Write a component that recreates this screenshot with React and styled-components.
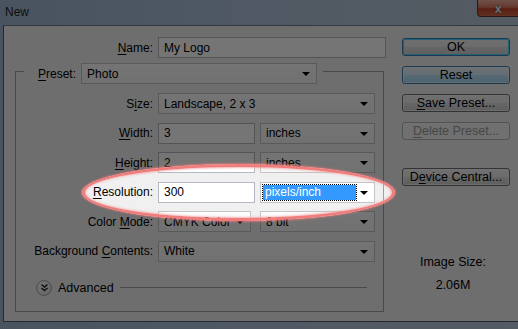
import React from 'react';
import styled, { createGlobalStyle } from 'styled-components';

const GlobalStyle = createGlobalStyle`
  html, body {
    margin: 0;
    padding: 0;
    background: #2b2f36;
  }
  * {
    box-sizing: border-box;
  }
`;

const Window = styled.div`
  position: relative;
  width: 518px;
  height: 329px;
  overflow: hidden;
  display: flex;
  flex-direction: column;
  background: linear-gradient(90deg, #9fb6cf 0%, #aec2d8 50%, #b7c6d6 100%);
  font-family: "Liberation Sans", Arial, sans-serif;
  font-size: 12px;
  color: #000;
`;

const TitleBar = styled.div`
  height: 25px;
  display: flex;
  align-items: flex-start;
  padding-left: 5px;
  flex-shrink: 0;
`;

const Title = styled.div`
  margin-top: 5px;
  font-size: 12px;
  color: #1e1e1e;
`;

const CloseButton = styled.div`
  margin-left: auto;
  width: 41px;
  height: 17px;
  border: 1px solid #5b3a36;
  border-top: none;
  border-right: none;
  border-radius: 0 0 0 4px;
  background: linear-gradient(180deg, #f0b3a3 0%, #dc7a62 45%, #c2452a 55%, #d66a4a 100%);
  display: flex;
  align-items: center;
  justify-content: center;
  color: #f2f2f2;
  font-weight: bold;
  font-size: 13px;
  text-shadow: 0 0 1px #333, 0 0 1px #333;
`;

const Body = styled.div`
  margin-left: 3px;
  height: 297px;
  border-left: 1px solid #4a5a6c;
  border-top: 1px solid #6b7d91;
  border-bottom: 1px solid #4a5a6c;
  background: #f0f0f0;
  display: flex;
  padding: 11px 0 0 11px;
  gap: 16px;
`;

const FormColumn = styled.div`
  width: 371px;
  display: flex;
  flex-direction: column;
`;

const Row = styled.div`
  display: flex;
  align-items: center;
  height: 21px;
  gap: 5px;
`;

const Label = styled.label`
  width: ${(p) => p.$width || 137}px;
  text-align: right;
  white-space: nowrap;
  flex-shrink: 0;
`;

const Key = styled.span`
  text-decoration: underline;
  text-underline-offset: 2px;
`;

const Input = styled.div`
  width: ${(p) => p.$width}px;
  height: 21px;
  border: 1px solid #b4b8c0;
  background: #fff;
  display: flex;
  align-items: center;
  padding-left: 5px;
  flex-shrink: 0;
`;

const Select = styled.div`
  position: relative;
  width: ${(p) => p.$width}px;
  height: 21px;
  border: 1px solid #c4c4c4;
  background: ${(p) => (p.$focus ? '#fff' : 'linear-gradient(180deg, #fdfdfd 0%, #f6f6f6 100%)')};
  display: flex;
  align-items: center;
  padding-left: ${(p) => (p.$focus ? 2 : 5)}px;
  flex-shrink: 0;
  &::after {
    content: '';
    position: absolute;
    right: 6px;
    top: 8px;
    border-left: 4px solid transparent;
    border-right: 4px solid transparent;
    border-top: 4px solid #000;
  }
`;

const Highlight = styled.span`
  width: 93px;
  height: 15px;
  background: #3399ff;
  color: #fff;
  outline: 1px dotted #000;
  display: flex;
  align-items: center;
  padding-left: 2px;
`;

const Group = styled.div`
  margin-top: 5px;
  display: flex;
  flex-direction: column;
  width: 369px;
`;

const GroupHead = styled.div`
  display: flex;
  align-items: flex-start;
  height: 21px;
`;

const HeadLine = styled.div`
  margin-top: 8px;
  margin-left: ${(p) => (p.$fill ? 6 : 0)}px;
  border-top: 1px solid #a0a0a0;
  width: ${(p) => (p.$fill ? 'auto' : '9px')};
  flex: ${(p) => (p.$fill ? 1 : '0 0 auto')};
  border-right: ${(p) => (p.$fill ? '1px solid #a0a0a0' : 'none')};
  border-left: ${(p) => (p.$fill ? 'none' : '1px solid #a0a0a0')};
  height: 13px;
`;

const PresetLabel = styled.label`
  margin-left: 14px;
  margin-right: 5px;
  height: 21px;
  display: flex;
  align-items: center;
`;

const GroupBox = styled.div`
  border: 1px solid #a0a0a0;
  border-top: none;
  height: 241px;
  margin-top: -13px;
  padding-top: 22px;
  display: flex;
  flex-direction: column;
`;

const Fields = styled.div`
  display: flex;
  flex-direction: column;
  gap: 8.5px;
`;

const Pair = styled.div`
  display: flex;
  gap: ${(p) => p.$gap || 5}px;
`;

const AdvancedRow = styled.div`
  margin-top: 18px;
  margin-left: 20px;
  margin-right: 16px;
  display: flex;
  align-items: center;
  height: 16px;
`;

const RoundButton = styled.div`
  width: 16px;
  height: 16px;
  border-radius: 50%;
  border: 1px solid #a9a9a9;
  background: radial-gradient(circle at 40% 35%, #ffffff 0%, #e6e6e6 60%, #cfcfcf 100%);
  display: flex;
  align-items: center;
  justify-content: center;
`;

const AdvancedText = styled.span`
  margin-left: 6px;
  margin-right: 6px;
  font-size: 12.5px;
`;

const Rule = styled.div`
  flex: 1;
  border-top: 1px solid #a0a0a0;
`;

const ButtonColumn = styled.div`
  display: flex;
  flex-direction: column;
  padding-top: 1px;
  width: 108px;
`;

const Button = styled.div`
  height: 18px;
  margin-top: ${(p) => p.$top || 0}px;
  border: 1px solid ${(p) => (p.$variant ? '#3c7fb1' : p.$disabled ? '#adb2b5' : '#707070')};
  border-radius: 3px;
  background: ${(p) =>
    p.$variant === 'hover'
      ? 'linear-gradient(180deg, #eaf6fd 0%, #d9f0fc 50%, #bee6fd 51%, #a7d9f5 100%)'
      : p.$disabled
      ? '#f4f4f4'
      : 'linear-gradient(180deg, #f2f2f2 0%, #ebebeb 50%, #dddddd 51%, #cfcfcf 100%)'};
  box-shadow: ${(p) => (p.$variant === 'default' ? 'inset 0 0 0 1px #48d5ff' : 'inset 0 0 0 1px rgba(255,255,255,0.6)')};
  color: ${(p) => (p.$disabled ? '#9a9a9a' : '#000')};
  display: flex;
  align-items: center;
  justify-content: center;
  font-size: 12.5px;
  white-space: nowrap;
`;

const SizeInfo = styled.div`
  margin-top: 69px;
  display: flex;
  flex-direction: column;
  align-items: center;
  gap: 9px;
  font-size: 12.5px;
  margin-left: -6px;
`;

const Spotlight = styled.div`
  position: absolute;
  left: 82px;
  top: 164px;
  width: 313px;
  height: 57px;
  border-radius: 50%;
  border: 3px solid #f07c7c;
  box-shadow:
    0 0 2px 1px rgba(240, 120, 120, 0.7),
    inset 0 0 2px 1px rgba(245, 170, 170, 0.8),
    0 0 0 1000px rgba(0, 0, 0, 0.54);
  pointer-events: none;
`;

function Chevrons() {
  return (
    <svg width="9" height="9" viewBox="0 0 9 9">
      <path d="M1.5 1.5 L4.5 4 L7.5 1.5" fill="none" stroke="#222" strokeWidth="1.4" />
      <path d="M1.5 5 L4.5 7.5 L7.5 5" fill="none" stroke="#222" strokeWidth="1.4" />
    </svg>
  );
}

export default function App() {
  return (
    <>
      <GlobalStyle />
      <Window>
        <TitleBar>
          <Title>New</Title>
          <CloseButton>x</CloseButton>
        </TitleBar>
        <Body>
          <FormColumn>
            <Row>
              <Label $width={138}><Key>N</Key>ame:</Label>
              <Input $width={228}>My Logo</Input>
            </Row>
            <Group>
              <GroupHead>
                <HeadLine />
                <PresetLabel><Key>P</Key>reset:</PresetLabel>
                <Select $width={236}>Photo</Select>
                <HeadLine $fill />
              </GroupHead>
              <GroupBox>
                <Fields>
                  <Row>
                    <Label>S<Key>i</Key>ze:</Label>
                    <Select $width={217}>Landscape, 2 x 3</Select>
                  </Row>
                  <Row>
                    <Label><Key>W</Key>idth:</Label>
                    <Pair>
                      <Input $width={97}>3</Input>
                      <Select $width={115}>inches</Select>
                    </Pair>
                  </Row>
                  <Row>
                    <Label><Key>H</Key>eight:</Label>
                    <Pair>
                      <Input $width={97}>2</Input>
                      <Select $width={115}>inches</Select>
                    </Pair>
                  </Row>
                  <Row>
                    <Label><Key>R</Key>esolution:</Label>
                    <Pair>
                      <Input $width={97}>300</Input>
                      <Select $width={115} $focus>
                        <Highlight>pixels/inch</Highlight>
                      </Select>
                    </Pair>
                  </Row>
                  <Row>
                    <Label>Color <Key>M</Key>ode:</Label>
                    <Pair $gap={9}>
                      <Select $width={93}>CMYK Color</Select>
                      <Select $width={115}>8 bit</Select>
                    </Pair>
                  </Row>
                  <Row>
                    <Label>Background <Key>C</Key>ontents:</Label>
                    <Select $width={217}>White</Select>
                  </Row>
                </Fields>
                <AdvancedRow>
                  <RoundButton><Chevrons /></RoundButton>
                  <AdvancedText>Advanced</AdvancedText>
                  <Rule />
                </AdvancedRow>
              </GroupBox>
            </Group>
          </FormColumn>
          <ButtonColumn>
            <Button $variant="default">OK</Button>
            <Button $variant="hover" $top={10}>Reset</Button>
            <Button $top={10}><Key>S</Key>ave Preset...</Button>
            <Button $top={10} $disabled><Key>D</Key>elete Preset...</Button>
            <Button $top={28}>D<Key>e</Key>vice Central...</Button>
            <SizeInfo>
              <span>Image Size:</span>
              <span>2.06M</span>
            </SizeInfo>
          </ButtonColumn>
        </Body>
        <Spotlight />
      </Window>
    </>
  );
}
